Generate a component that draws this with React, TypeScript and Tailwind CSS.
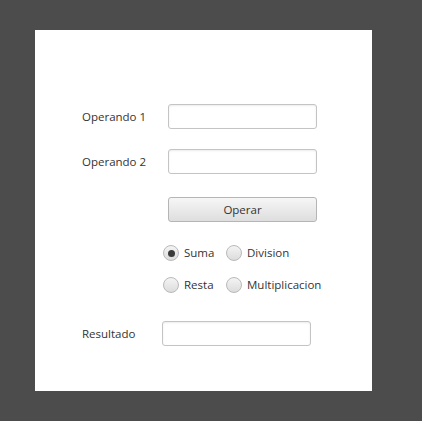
import React from 'react';

const font = { fontFamily: '"Open Sans", "Noto Sans", sans-serif' };

const Field = ({ width = 'w-[149px]' }: { width?: string }) => (
  <div
    className={`${width} h-[25px] rounded-[3px] border border-[#c4c4c4] bg-white shadow-[inset_0_1px_2px_rgba(0,0,0,0.08)]`}
  />
);

const Radio = ({ label, checked = false }: { label: string; checked?: boolean }) => (
  <label className="flex items-center gap-[5px] h-[16px]">
    <span className="w-[16px] h-[16px] rounded-full border border-[#b9b9b9] bg-gradient-to-b from-[#f4f4f4] to-[#dcdcdc] flex items-center justify-center">
      {checked && <span className="w-[7px] h-[7px] rounded-full bg-[#3a3a3a]" />}
    </span>
    <span className="text-[11.5px] leading-[16px] text-[#333]">{label}</span>
  </label>
);

const App = () => {
  return (
    <div className="w-[422px] h-[421px] bg-[#4c4c4c] pt-[30px] pl-[35px]" style={font}>
      <div className="w-[337px] h-[361px] bg-white pt-[74px] pl-[47px] flex flex-col">
        <div className="flex items-center h-[25px]">
          <span className="w-[86px] text-[11.5px] text-[#333]">Operando 1</span>
          <Field />
        </div>
        <div className="flex items-center h-[25px] mt-[20px]">
          <span className="w-[86px] text-[11.5px] text-[#333]">Operando 2</span>
          <Field />
        </div>
        <div className="flex pl-[86px] mt-[23px]">
          <button className="w-[149px] h-[25px] rounded-[3px] border border-[#b5b5b5] bg-gradient-to-b from-[#f6f6f6] to-[#dedede] text-[11.5px] leading-none text-[#333]">
            Operar
          </button>
        </div>
        <div className="pl-[81px] mt-[23px] grid grid-cols-[63px_auto] gap-y-[16px]">
          <Radio label="Suma" checked />
          <Radio label="Division" />
          <Radio label="Resta" />
          <Radio label="Multiplicacion" />
        </div>
        <div className="flex items-center h-[25px] mt-[28px]">
          <span className="w-[80px] text-[11.5px] text-[#333]">Resultado</span>
          <Field />
        </div>
      </div>
    </div>
  );
};

export default App;
